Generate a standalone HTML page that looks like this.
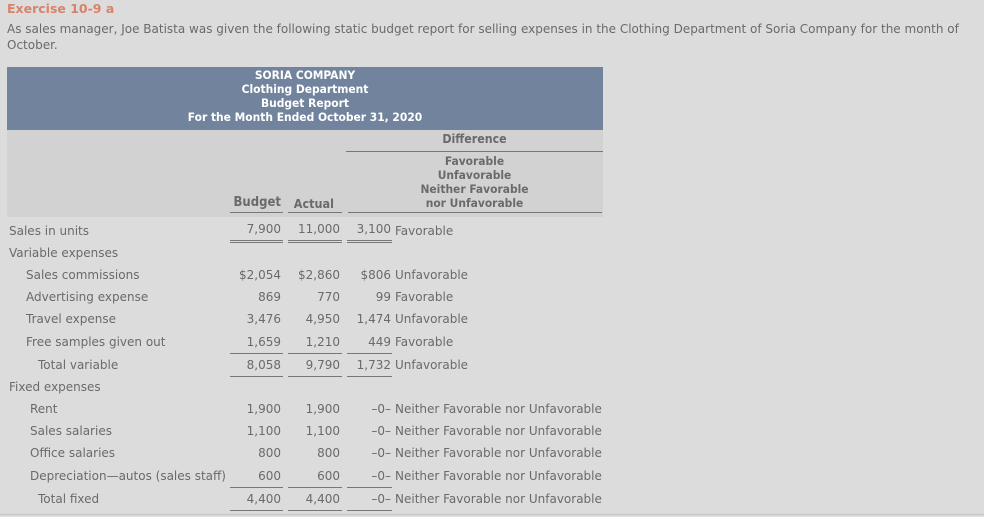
<!DOCTYPE html><html><head><style>
body{margin:0;width:984px;height:516px;background:#dcdcdc;font-family:"DejaVu Sans",Verdana,sans-serif;color:#6a6a6a;font-size:12px;position:relative;overflow:hidden}
.a{position:absolute;white-space:nowrap}
.r{position:absolute;text-align:right;white-space:nowrap}
.hd{font-family:"DejaVu Sans Condensed","DejaVu Sans",sans-serif;font-weight:bold;font-size:11.9px}
.ln{position:absolute;height:1px;background:#777}
.d{position:absolute;left:0;top:1px;width:984px;height:516px}
</style></head><body>
<div class="a" style="left:7px;top:1px;color:#d9826a;font-weight:bold;font-size:12.5px">Exercise 10-9 a</div>
<div class="a" style="left:7px;top:21px;font-size:12px;line-height:16px;white-space:normal;width:975px">As sales manager, Joe Batista was given the following static budget report for selling expenses in the Clothing Department of Soria Company for the month of October.</div>
<div class="a" style="left:7px;top:67px;width:596px;height:63px;background:#72849d"></div>
<div class="a hd" style="left:7px;top:68px;width:596px;text-align:center;color:#fff;line-height:14px">SORIA COMPANY<br>Clothing Department<br>Budget Report<br>For the Month Ended October 31, 2020</div>
<div class="a" style="left:7px;top:130px;width:596px;height:87px;background:#d2d2d2"></div>
<div class="a hd" style="left:346px;top:132px;width:257px;text-align:center;font-size:12.3px">Difference</div>
<div class="ln" style="left:346px;top:151px;width:257px"></div>
<div class="a hd" style="left:346px;top:154px;width:257px;text-align:center;line-height:14px">Favorable<br>Unfavorable<br>Neither Favorable<br>nor Unfavorable</div>
<div class="r hd" style="left:200px;width:81px;top:195px;font-size:13px">Budget</div>
<div class="r hd" style="left:270px;width:64px;top:196px;font-size:12.5px">Actual</div>
<div class="ln" style="left:230px;top:212px;width:53px"></div>
<div class="ln" style="left:288px;top:212px;width:54px"></div>
<div class="ln" style="left:348px;top:212px;width:254px"></div>
<div class="d">
<div class="a" style="left:9px;top:223px">Sales in units</div>
<div class="r" style="left:200px;width:81px;top:221px">7,900</div>
<div class="r" style="left:280px;width:60px;top:221px">11,000</div>
<div class="r" style="left:340px;width:51px;top:221px">3,100</div>
<div class="a" style="left:395px;top:223px">Favorable</div>
<div class="ln" style="left:230px;top:239px;width:53px"></div><div class="ln" style="left:230px;top:241px;width:53px"></div>
<div class="ln" style="left:288px;top:239px;width:54px"></div><div class="ln" style="left:288px;top:241px;width:54px"></div>
<div class="ln" style="left:347px;top:239px;width:45px"></div><div class="ln" style="left:347px;top:241px;width:45px"></div>
<div class="a" style="left:9px;top:245px">Variable expenses</div>
<div class="a" style="left:26px;top:267px">Sales commissions</div>
<div class="r" style="left:200px;width:81px;top:267px">$2,054</div><div class="r" style="left:280px;width:60px;top:267px">$2,860</div><div class="r" style="left:340px;width:51px;top:267px">$806</div><div class="a" style="left:395px;top:267px">Unfavorable</div>
<div class="a" style="left:26px;top:289px">Advertising expense</div>
<div class="r" style="left:200px;width:81px;top:289px">869</div><div class="r" style="left:280px;width:60px;top:289px">770</div><div class="r" style="left:340px;width:51px;top:289px">99</div><div class="a" style="left:395px;top:289px">Favorable</div>
<div class="a" style="left:26px;top:311px">Travel expense</div>
<div class="r" style="left:200px;width:81px;top:311px">3,476</div><div class="r" style="left:280px;width:60px;top:311px">4,950</div><div class="r" style="left:340px;width:51px;top:311px">1,474</div><div class="a" style="left:395px;top:311px">Unfavorable</div>
<div class="a" style="left:26px;top:334px">Free samples given out</div>
<div class="r" style="left:200px;width:81px;top:334px">1,659</div><div class="r" style="left:280px;width:60px;top:334px">1,210</div><div class="r" style="left:340px;width:51px;top:334px">449</div><div class="a" style="left:395px;top:334px">Favorable</div>
<div class="ln" style="left:230px;top:352px;width:53px"></div><div class="ln" style="left:288px;top:352px;width:54px"></div><div class="ln" style="left:347px;top:352px;width:45px"></div>
<div class="a" style="left:38px;top:357px">Total variable</div>
<div class="r" style="left:200px;width:81px;top:357px">8,058</div><div class="r" style="left:280px;width:60px;top:357px">9,790</div><div class="r" style="left:340px;width:51px;top:357px">1,732</div><div class="a" style="left:395px;top:357px">Unfavorable</div>
<div class="ln" style="left:230px;top:375px;width:53px"></div><div class="ln" style="left:288px;top:375px;width:54px"></div><div class="ln" style="left:347px;top:375px;width:45px"></div>
<div class="a" style="left:9px;top:379px">Fixed expenses</div>
<div class="a" style="left:30px;top:401px">Rent</div>
<div class="r" style="left:200px;width:81px;top:401px">1,900</div><div class="r" style="left:280px;width:60px;top:401px">1,900</div><div class="r" style="left:340px;width:51px;top:401px">–0–</div><div class="a" style="left:395px;top:401px">Neither Favorable nor Unfavorable</div>
<div class="a" style="left:30px;top:423px">Sales salaries</div>
<div class="r" style="left:200px;width:81px;top:423px">1,100</div><div class="r" style="left:280px;width:60px;top:423px">1,100</div><div class="r" style="left:340px;width:51px;top:423px">–0–</div><div class="a" style="left:395px;top:423px">Neither Favorable nor Unfavorable</div>
<div class="a" style="left:30px;top:445px">Office salaries</div>
<div class="r" style="left:200px;width:81px;top:445px">800</div><div class="r" style="left:280px;width:60px;top:445px">800</div><div class="r" style="left:340px;width:51px;top:445px">–0–</div><div class="a" style="left:395px;top:445px">Neither Favorable nor Unfavorable</div>
<div class="a" style="left:30px;top:468px">Depreciation—autos (sales staff)</div>
<div class="r" style="left:200px;width:81px;top:468px">600</div><div class="r" style="left:280px;width:60px;top:468px">600</div><div class="r" style="left:340px;width:51px;top:468px">–0–</div><div class="a" style="left:395px;top:468px">Neither Favorable nor Unfavorable</div>
<div class="ln" style="left:230px;top:486px;width:53px"></div><div class="ln" style="left:288px;top:486px;width:54px"></div><div class="ln" style="left:347px;top:486px;width:45px"></div>
<div class="a" style="left:38px;top:491px">Total fixed</div>
<div class="r" style="left:200px;width:81px;top:491px">4,400</div><div class="r" style="left:280px;width:60px;top:491px">4,400</div><div class="r" style="left:340px;width:51px;top:491px">–0–</div><div class="a" style="left:395px;top:491px">Neither Favorable nor Unfavorable</div>
<div class="ln" style="left:230px;top:509px;width:53px"></div><div class="ln" style="left:288px;top:509px;width:54px"></div><div class="ln" style="left:347px;top:509px;width:45px"></div>
</div>
<div class="ln" style="left:0;top:514px;width:984px;background:#c4c4c4"></div>
</body></html>
